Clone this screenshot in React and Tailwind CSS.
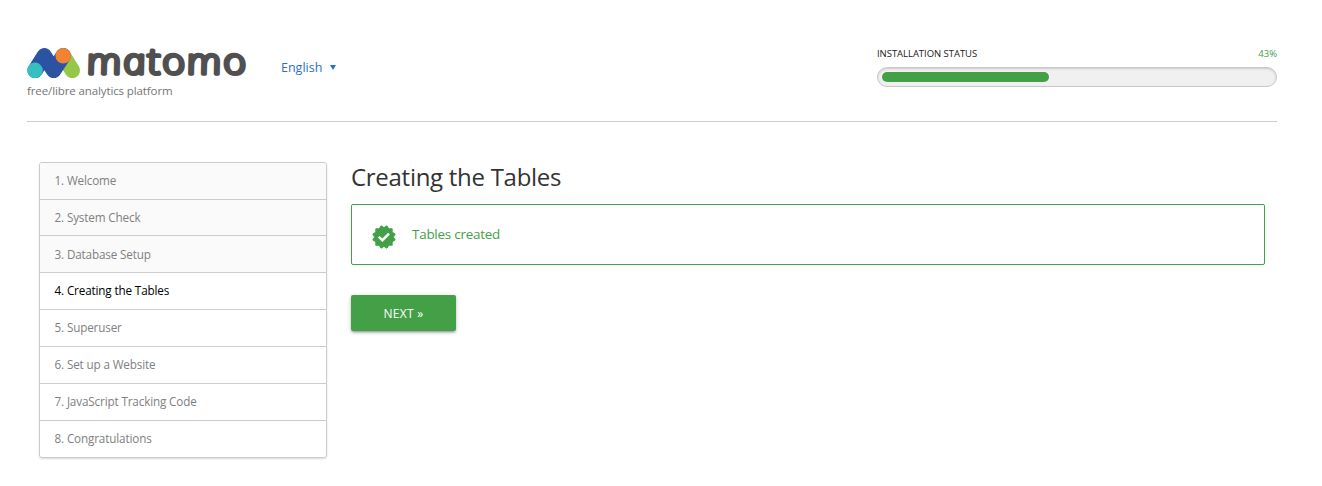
import { useState } from 'react'

const STEPS = [
  'Welcome',
  'System Check',
  'Database Setup',
  'Creating the Tables',
  'Superuser',
  'Set up a Website',
  'JavaScript Tracking Code',
  'Congratulations',
]

const CURRENT_STEP = 4
const PROGRESS = 43

function Logo() {
  return (
    <svg width="224" height="36" viewBox="0 0 224 36" className="block overflow-visible" role="img" aria-label="Matomo">
      <g fill="none" strokeWidth="15.4" strokeLinecap="round" strokeLinejoin="round">
        <path d="M36.2 11.8L45.3 26.4" stroke="#95c748" />
        <path d="M8.2 26.4L17.3 11.8L26.6 26.4L36.2 11.8" stroke="#2b53a1" />
      </g>
      <circle cx="36.2" cy="11.7" r="7.8" fill="#f38334" />
      <circle cx="8" cy="26.4" r="7.8" fill="#35bfc0" />
      {/* the italic has the single-storey "a"; the skew sets it upright again */}
      <text
        transform="translate(61.8 30.4) skewX(12)"
        textLength="161"
        lengthAdjust="spacingAndGlyphs"
        className="fill-[#505050] stroke-[#505050] font-['Open_Sans',sans-serif] text-[36px] font-light tracking-[1.6px] italic"
        strokeWidth="3.5"
        strokeLinejoin="round"
      >
        matomo
      </text>
    </svg>
  )
}

function SuccessIcon() {
  // 12 teeth around the badge
  const points = Array.from({ length: 24 }, (_, i) => {
    const radius = i % 2 === 0 ? 11.6 : 9.4
    const angle = ((i * 15 - 75) * Math.PI) / 180
    return `${12 + radius * Math.cos(angle)},${12 + radius * Math.sin(angle)}`
  }).join(' ')

  return (
    <svg width="24" height="24" viewBox="0 0 24 24" className="mt-[0.5px] shrink-0">
      <polygon points={points} fill="#43a047" stroke="#43a047" strokeWidth="1" strokeLinejoin="round" />
      <path d="M6.8 11.8L10.4 15.2L17 8.6" fill="none" stroke="#fff" strokeWidth="2.5" />
    </svg>
  )
}

function stepClass(number) {
  if (number === CURRENT_STEP) return 'text-black'
  if (number < CURRENT_STEP) return 'bg-[#fafafa] text-[#808080]'
  return 'text-[#808080]'
}

function App() {
  const [language] = useState('English')

  return (
    <div className="h-[486px] overflow-hidden bg-white pl-[27px] pr-[45px] pt-[44px] font-['Open_Sans',sans-serif] text-[#212121]">
      <header className="flex h-[78px] items-start border-b border-[#ccc]">
        <div className="w-[220px]">
          <Logo />
          <p className="mt-[3px] text-[11.5px] leading-4 tracking-[-0.11px] text-[#757575]">free/libre analytics platform</p>
        </div>
        <button type="button" className="ml-[34px] mt-[15px] flex items-center gap-2 text-[12.5px] leading-[18px] text-[#2a6fd0]">
          {language}
          <svg width="6" height="5" viewBox="0 0 6 5" fill="currentColor" className="-mt-px">
            <path d="M0 0H6L3 5Z" />
          </svg>
        </button>
        <div className="ml-auto w-[400px]">
          <div className="mt-[2px] flex justify-between text-[9.5px] leading-4">
            <span className="tracking-[-0.04px]">INSTALLATION STATUS</span>
            <span className="text-[#43a047]">{PROGRESS}%</span>
          </div>
          <div className="mt-[5px] h-5 rounded-full border border-[#c8c8c8] bg-[#f0f0f0] p-1 pr-[5px] shadow-[inset_0_1px_2px_#ccc]">
            <div className="h-[10px] rounded-full bg-[#43a047]" style={{ width: `${PROGRESS}%` }} />
          </div>
        </div>
      </header>

      <main className="flex gap-6 pl-3 pr-3 pt-10">
        <ol className="h-[296px] w-72 shrink-0 overflow-hidden rounded-[3px] border border-[#ccc] shadow-[0_1px_2px_rgba(0,0,0,0.15)]">
          {STEPS.map((step, index) => (
            <li
              key={step}
              className={`flex h-[36.85px] items-center border-b border-[#ccc] pl-[14.5px] text-[11.7px] tracking-[-0.14px] first:h-[36.6px] last:h-9 last:border-b-0 ${stepClass(index + 1)}`}
            >
              {index + 1}. {step}
            </li>
          ))}
        </ol>

        <section className="flex-1">
          <h2 className="h-[42px] text-[24px] leading-[29px] tracking-[-0.28px] text-[#333]">Creating the Tables</h2>
          <div className="flex h-[61px] rounded-[2px] border border-[#43a047] pl-5 pt-[19px] text-[#43a047]">
            <SuccessIcon />
            <span className="ml-4 text-[13.4px] leading-5 tracking-[-0.22px]">Tables created</span>
          </div>
          <button
            type="button"
            className="mt-[30px] h-9 w-[105px] rounded-[2px] bg-[#43a047] pt-[2px] text-[12px] tracking-[0.3px] text-white shadow-[0_2px_2px_rgba(0,0,0,0.14),0_3px_1px_-2px_rgba(0,0,0,0.12),0_1px_5px_rgba(0,0,0,0.2)]"
          >
            NEXT »
          </button>
        </section>
      </main>
    </div>
  )
}

export default App
